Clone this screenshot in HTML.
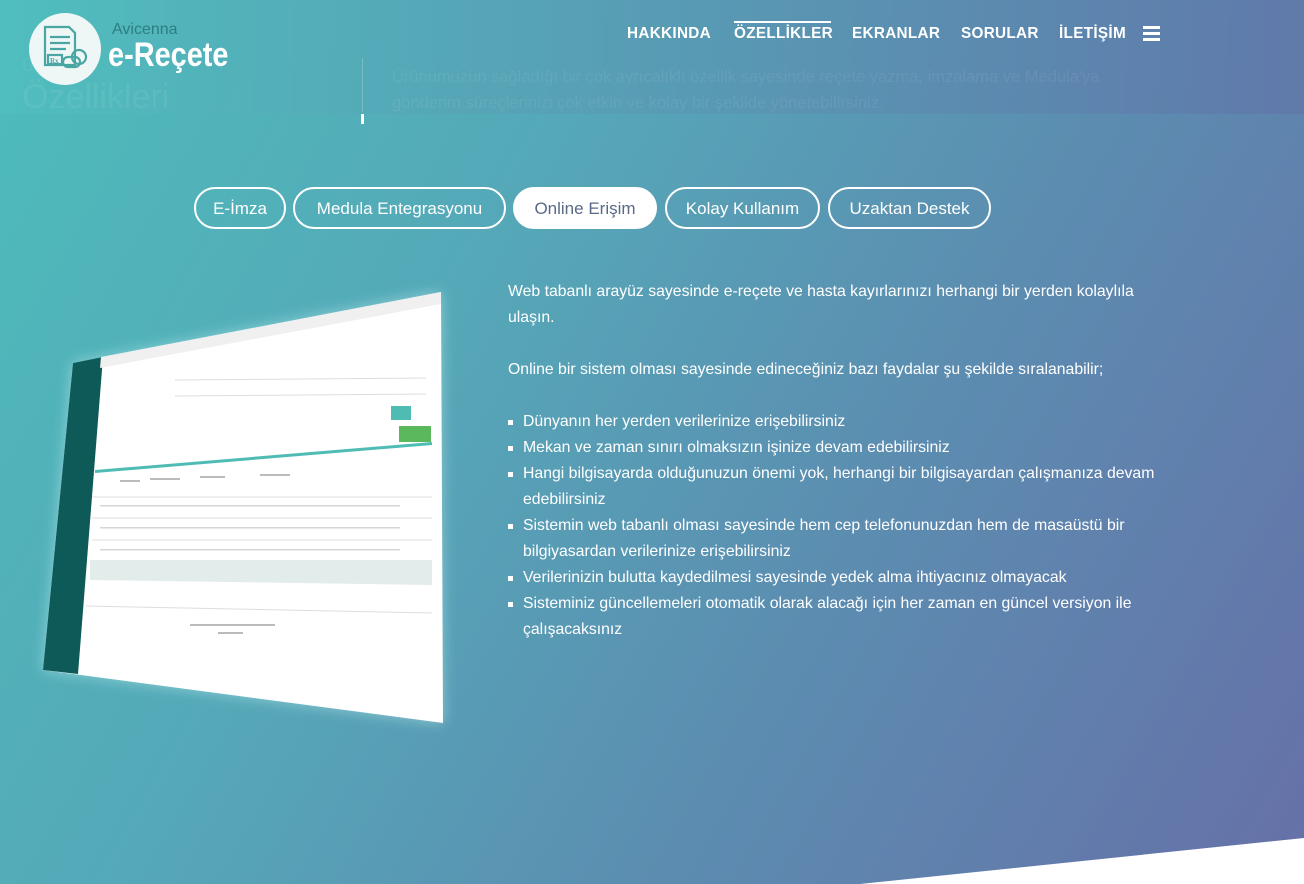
<!DOCTYPE html>
<html><head><meta charset="utf-8">
<style>
*{margin:0;padding:0;box-sizing:border-box}
body{width:1304px;height:884px;overflow:hidden;position:relative;font-family:"Liberation Sans",sans-serif;color:#fff;
background:linear-gradient(120deg,#4dbcbb 0%,#55a8b8 35%,#5c8cb0 65%,#6670a8 100%);}
.hdr{position:absolute;left:0;top:0;width:1304px;height:114px;background:linear-gradient(90deg,rgba(80,190,190,.9),rgba(96,120,170,.9));}
.ghost{position:absolute;color:rgba(255,255,255,.07)}
.logo{position:absolute;left:29px;top:13px;width:72px;height:72px;border-radius:50%;background:#eef7f6}
.nav{position:absolute;top:25px;font-weight:bold;font-size:15.3px;letter-spacing:.3px}
.tab{position:absolute;top:187px;height:42px;border:2px solid #fff;border-radius:21px;font-size:17px;line-height:40px;text-align:center;color:#fff}
.txt{position:absolute;left:508px;top:279px;width:655px;font-size:15.8px;line-height:26px}
.txt li{list-style:none;position:relative;padding-left:15px}
.txt li:before{content:"";position:absolute;left:0;top:11px;width:5px;height:5px;background:#fff}
</style></head><body>
<div class="hdr"></div>
<div class="ghost" style="left:22px;top:78px;font-size:34px">Özellikleri</div>
<div class="ghost" style="left:22px;top:58px;font-size:16px">Ürün</div>
<div style="position:absolute;left:362px;top:58px;width:1px;height:54px;background:rgba(255,255,255,.2)"></div>
<div style="position:absolute;left:361px;top:114px;width:3px;height:10px;background:#fff"></div>
<div class="ghost" style="left:392px;top:64px;font-size:16.5px;line-height:26px;width:820px">Ürünümüzün sağladığı bir çok ayrıcalıklı özellik sayesinde reçete yazma, imzalama ve Medula'ya<br>gönderim süreçlerinizi çok etkin ve kolay bir şekilde yönetebilirsiniz.</div>
<div class="logo">
<svg width="72" height="72" viewBox="0 0 72 72"><g fill="none" stroke="#4aa6a3" stroke-width="2.2"><path d="M16 14h24l6 6v32H16z"/><path d="M21 24h20M21 30h20M21 36h16"/><rect x="19" y="42" width="14" height="9"/><rect x="34" y="44" width="17" height="10" rx="5"/><circle cx="50" cy="44" r="7"/></g><text x="21" y="50" font-size="7" fill="#4aa6a3" font-family="Liberation Serif" font-weight="bold">Rx</text></svg>
</div>
<div style="position:absolute;left:112px;top:21px;font-size:16px;color:#2d7e80">Avicenna</div>
<div style="position:absolute;left:108px;top:36px;font-size:34px;font-weight:bold;transform:scaleX(.85);transform-origin:left">e-Reçete</div>
<div class="nav" style="left:627px">HAKKINDA</div>
<div class="nav" style="left:734px">ÖZELLİKLER</div>
<div style="position:absolute;left:734px;top:21px;width:97px;height:2px;background:#fff"></div>
<div class="nav" style="left:852px">EKRANLAR</div>
<div class="nav" style="left:961px">SORULAR</div>
<div class="nav" style="left:1059px">İLETİŞİM</div>
<div style="position:absolute;left:1143px;top:26px;width:17px;height:3px;background:#fff;box-shadow:0 6px 0 #fff,0 12px 0 #fff"></div>

<div class="tab" style="left:194px;width:92px">E-İmza</div>
<div class="tab" style="left:293px;width:213px">Medula Entegrasyonu</div>
<div class="tab" style="left:513px;width:144px;background:#fff;color:#5a6a86">Online Erişim</div>
<div class="tab" style="left:665px;width:155px">Kolay Kullanım</div>
<div class="tab" style="left:828px;width:163px">Uzaktan Destek</div>

<svg style="position:absolute;left:0;top:0" width="1304" height="884">
<defs><filter id="g" x="-20%" y="-20%" width="140%" height="140%"><feGaussianBlur stdDeviation="7"/></filter></defs>
<polygon points="73,363 441,292 443,723 43,670" fill="#c8f4f2" opacity=".5" filter="url(#g)"/>
<polygon points="73,363 441,292 443,723 43,670" fill="#fff"/>
<polygon points="73,363 103,357 78,674 43,670" fill="#0e5a58"/>
<polygon points="101,357 441,292 441,304 100,368" fill="#f0f0f0"/>
<polygon points="90,560 432,560 432,585 90,580" fill="#e2ecea"/>
<polygon points="95,470 432,442 432,445 95,473" fill="#4fbcb4"/>
<g stroke="#ddd" stroke-width="1"><line x1="92" y1="497" x2="432" y2="497"/><line x1="92" y1="518" x2="432" y2="518"/><line x1="92" y1="540" x2="432" y2="540"/><line x1="86" y1="606" x2="432" y2="613"/><line x1="175" y1="380" x2="426" y2="378"/><line x1="175" y1="396" x2="426" y2="394"/></g>
<g fill="#bbb"><rect x="120" y="480" width="20" height="2"/><rect x="150" y="478" width="30" height="2"/><rect x="200" y="476" width="25" height="2"/><rect x="260" y="474" width="30" height="2"/><rect x="100" y="505" width="300" height="1.5" opacity=".6"/><rect x="100" y="527" width="300" height="1.5" opacity=".6"/><rect x="100" y="549" width="300" height="1.5" opacity=".6"/><rect x="190" y="624" width="85" height="2"/><rect x="218" y="632" width="25" height="2"/></g>
<rect x="391" y="406" width="20" height="14" fill="#4fbcb4"/>
<rect x="399" y="426" width="32" height="16" fill="#5cb85c"/>
<polygon points="860,884 1304,838 1304,884" fill="#fff"/>
</svg>

<div class="txt">
<p>Web tabanlı arayüz sayesinde e-reçete ve hasta kayırlarınızı herhangi bir yerden kolaylıla ulaşın.</p>
<p style="margin-top:26px">Online bir sistem olması sayesinde edineceğiniz bazı faydalar şu şekilde sıralanabilir;</p>
<ul style="margin-top:26px">
<li>Dünyanın her yerden verilerinize erişebilirsiniz</li>
<li>Mekan ve zaman sınırı olmaksızın işinize devam edebilirsiniz</li>
<li>Hangi bilgisayarda olduğunuzun önemi yok, herhangi bir bilgisayardan çalışmanıza devam edebilirsiniz</li>
<li>Sistemin web tabanlı olması sayesinde hem cep telefonunuzdan hem de masaüstü bir bilgiyasardan verilerinize erişebilirsiniz</li>
<li>Verilerinizin bulutta kaydedilmesi sayesinde yedek alma ihtiyacınız olmayacak</li>
<li>Sisteminiz güncellemeleri otomatik olarak alacağı için her zaman en güncel versiyon ile çalışacaksınız</li>
</ul>
</div>
</body></html>
